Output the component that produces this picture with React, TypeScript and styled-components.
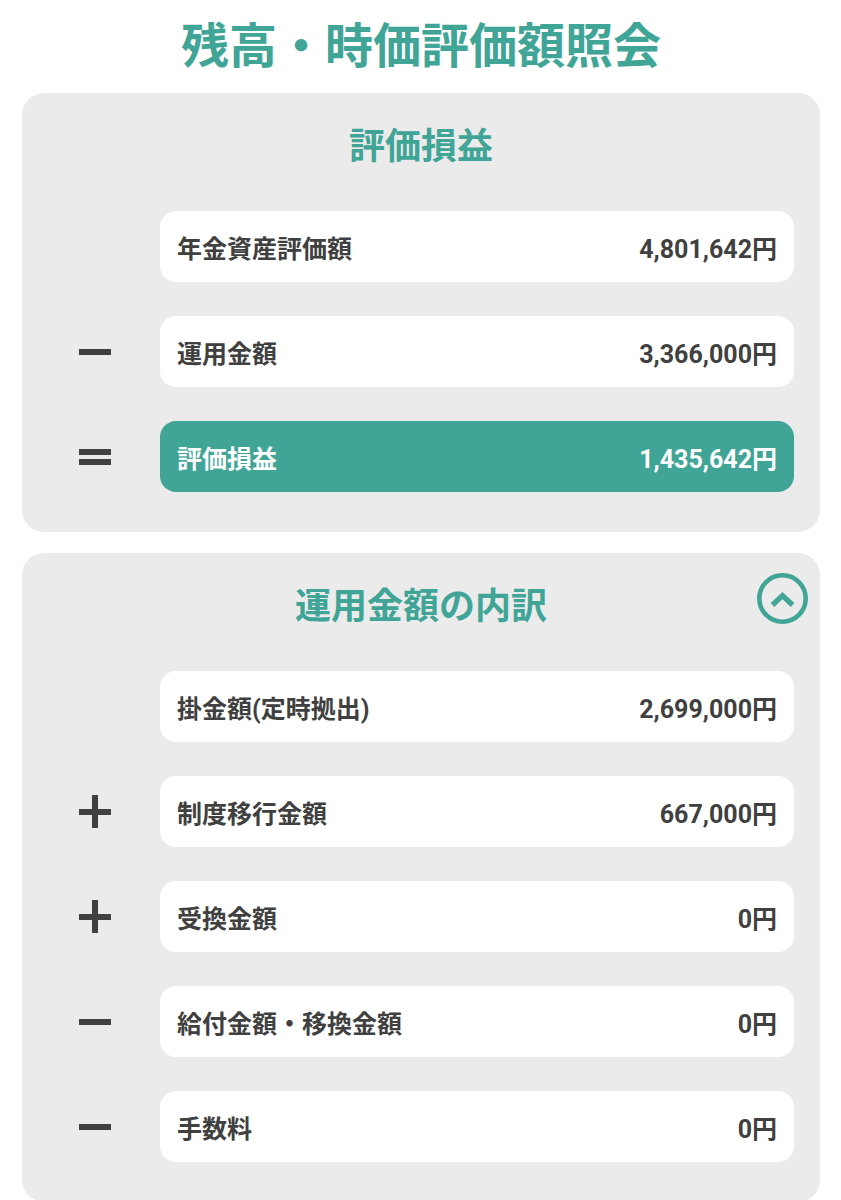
import React from "react";
import styled, { createGlobalStyle } from "styled-components";

const TEAL = "#40a597";
const INK = "#404040";

type Op = "none" | "minus" | "plus" | "equals";

interface Item {
  op: Op;
  label: string;
  value: string;
  highlight?: boolean;
}

const profitItems: Item[] = [
  { op: "none", label: "年金資産評価額", value: "4,801,642円" },
  { op: "minus", label: "運用金額", value: "3,366,000円" },
  { op: "equals", label: "評価損益", value: "1,435,642円", highlight: true },
];

const breakdownItems: Item[] = [
  { op: "none", label: "掛金額(定時拠出)", value: "2,699,000円" },
  { op: "plus", label: "制度移行金額", value: "667,000円" },
  { op: "plus", label: "受換金額", value: "0円" },
  { op: "minus", label: "給付金額・移換金額", value: "0円" },
  { op: "minus", label: "手数料", value: "0円" },
];

const GlobalStyle = createGlobalStyle`
  body {
    margin: 0;
    background: #ffffff;
    font-family: Roboto, "Noto Sans CJK JP", sans-serif;
  }
`;

const Operator: React.FC<{ op: Op }> = ({ op }) => {
  if (op === "minus") return <Bar />;
  if (op === "equals")
    return (
      <EqualsMark>
        <Bar />
        <Bar />
      </EqualsMark>
    );
  if (op === "plus")
    return (
      <PlusMark>
        <Bar />
        <PlusStem />
      </PlusMark>
    );
  return null;
};

const Section: React.FC<{ title: string; items: Item[]; toggle?: boolean }> = ({ title, items, toggle }) => (
  <Card>
    <CardTitle>{title}</CardTitle>
    {toggle && (
      <ToggleButton aria-label="閉じる">
        <svg width="51" height="51" viewBox="0 0 51 51">
          <circle cx="25.5" cy="25.5" r="23.2" fill="none" stroke={TEAL} strokeWidth="4.6" />
          <polyline points="15.5,32 25.5,22.5 35.5,32" fill="none" stroke={TEAL} strokeWidth="5.2" />
        </svg>
      </ToggleButton>
    )}
    <RowList>
      {items.map((item) => (
        <Row key={item.label}>
          <OpCell>
            <Operator op={item.op} />
          </OpCell>
          <ValueBox $highlight={item.highlight}>
            <span>{item.label}</span>
            <span>{item.value}</span>
          </ValueBox>
        </Row>
      ))}
    </RowList>
  </Card>
);

const App: React.FC = () => (
  <Page>
    <GlobalStyle />
    <PageTitle>残高・時価評価額照会</PageTitle>
    <Section title="評価損益" items={profitItems} />
    <Section title="運用金額の内訳" items={breakdownItems} toggle />
  </Page>
);

const Page = styled.div`
  display: flex;
  flex-direction: column;
  gap: 21px;
  padding: 10px 21px 0 22px;
`;

const PageTitle = styled.h1`
  margin: 0 0 -2px;
  text-align: center;
  font-family: "Noto Sans CJK JP", sans-serif;
  font-size: 48px;
  line-height: 64px;
  font-weight: 700;
  color: ${TEAL};
`;

const Card = styled.section`
  position: relative;
  background: #ebebeb;
  border-radius: 22px;
  padding: 25px 26px 40px 0;
`;

const CardTitle = styled.h2`
  margin: 0 0 43px;
  text-align: center;
  font-family: "Noto Sans CJK JP", sans-serif;
  font-size: 36px;
  line-height: 50px;
  font-weight: 700;
  color: ${TEAL};
  padding-left: 26px;
`;

const ToggleButton = styled.button`
  position: absolute;
  top: 20px;
  right: 12px;
  width: 51px;
  height: 51px;
  padding: 0;
  border: none;
  background: transparent;
  cursor: pointer;
  svg {
    display: block;
  }
`;

const RowList = styled.div`
  display: flex;
  flex-direction: column;
  gap: 34px;
`;

const Row = styled.div`
  display: flex;
  align-items: center;
`;

const OpCell = styled.div`
  width: 138px;
  flex-shrink: 0;
  display: flex;
  align-items: center;
  padding-left: 57px;
  box-sizing: border-box;
`;

const Bar = styled.span`
  display: block;
  width: 32px;
  height: 6px;
  background: ${INK};
`;

const EqualsMark = styled.span`
  display: flex;
  flex-direction: column;
  gap: 4px;
`;

const PlusMark = styled.span`
  position: relative;
  display: flex;
  align-items: center;
  height: 33px;
`;

const PlusStem = styled.span`
  position: absolute;
  left: 13px;
  top: 0;
  width: 6px;
  height: 33px;
  background: ${INK};
`;

const ValueBox = styled.div<{ $highlight?: boolean }>`
  flex: 1;
  height: 71px;
  display: flex;
  align-items: center;
  justify-content: space-between;
  padding: 0 17px;
  border-radius: 16px;
  background: ${({ $highlight }) => ($highlight ? TEAL : "#ffffff")};
  color: ${({ $highlight }) => ($highlight ? "#ffffff" : INK)};
  font-size: 25px;
  font-weight: 700;
`;

export default App;
